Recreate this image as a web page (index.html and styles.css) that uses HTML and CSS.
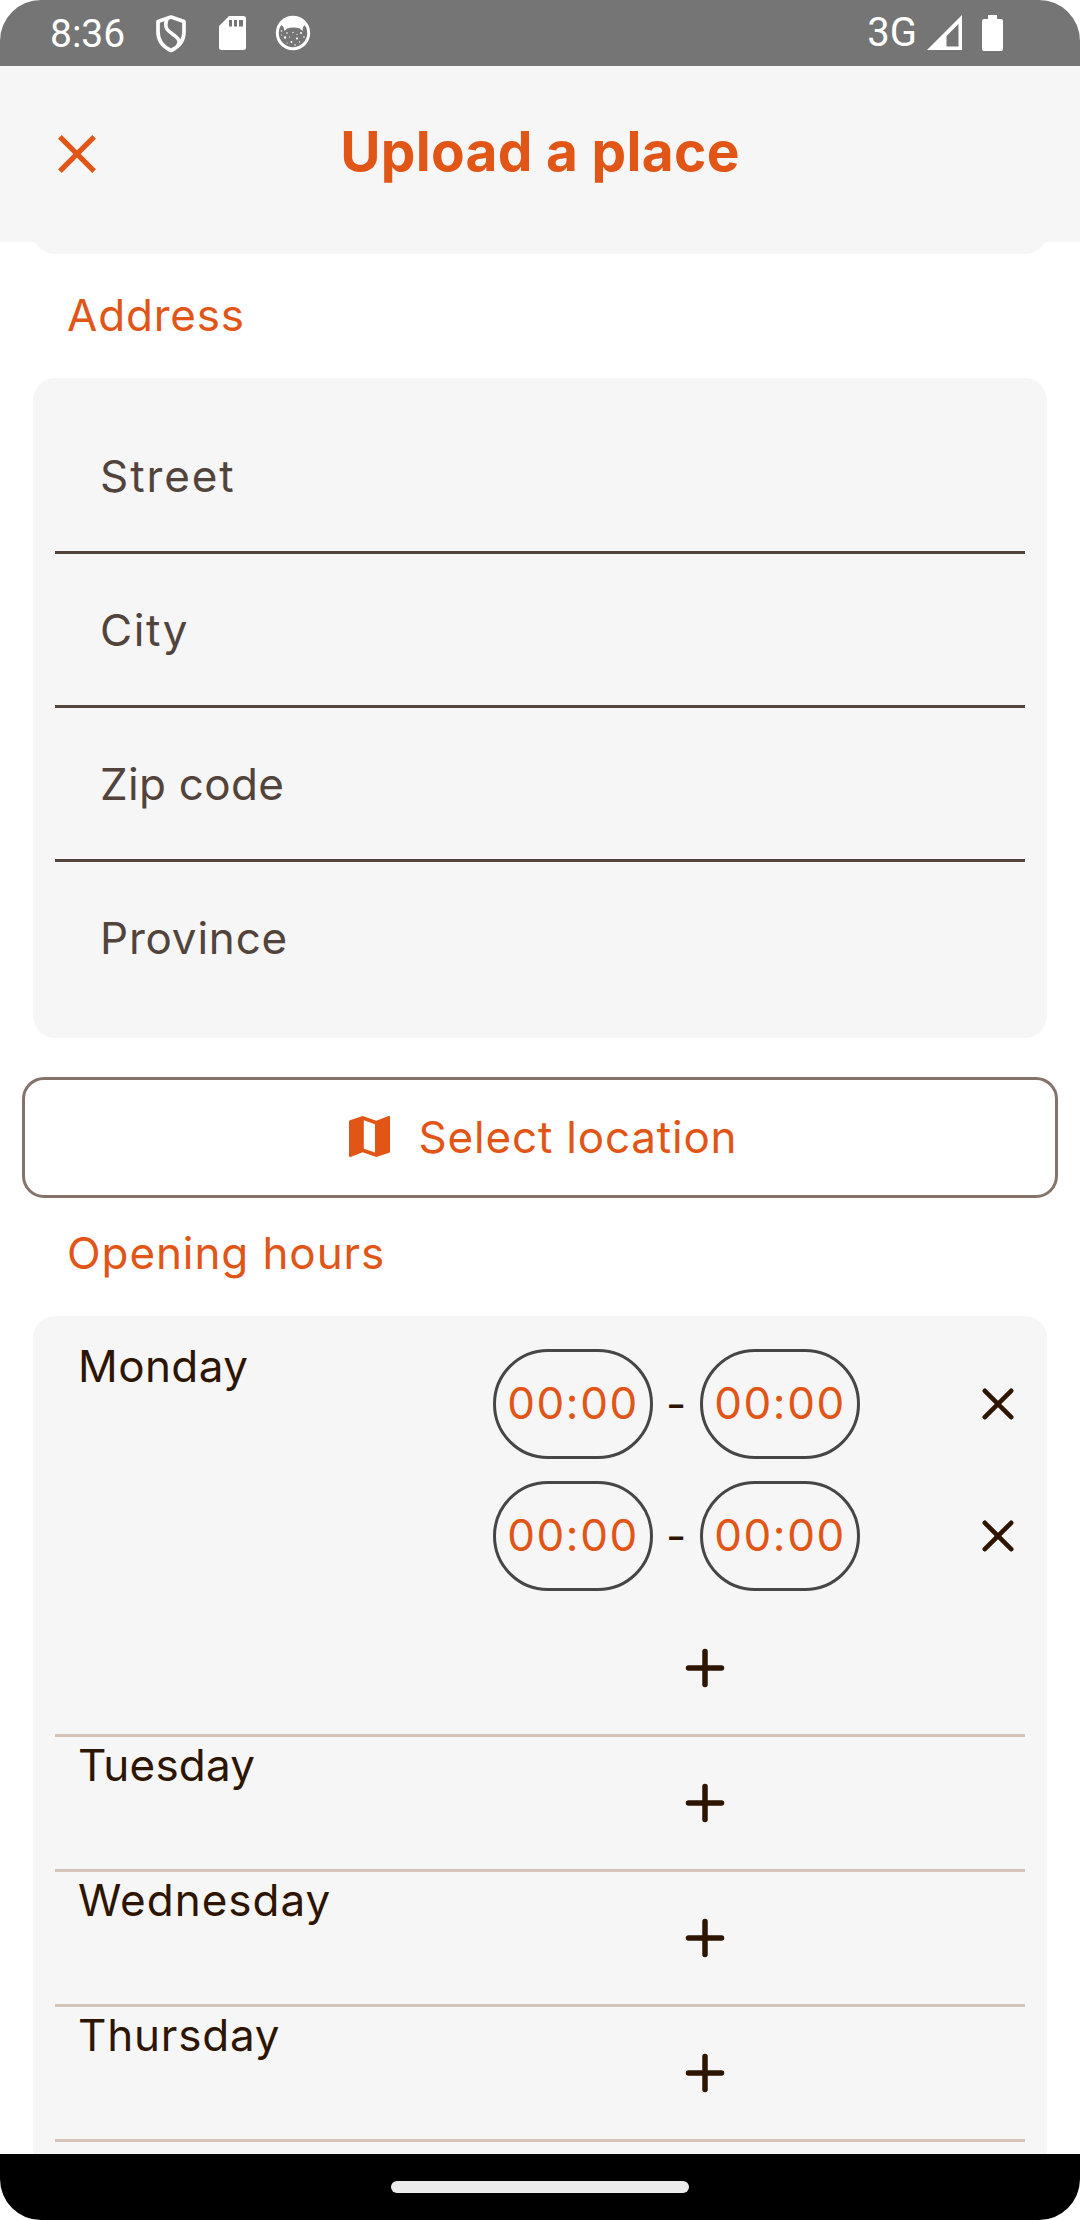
FILE: index.html
```html
<!DOCTYPE html>
<html lang="en">
<head>
<meta charset="utf-8">
<title>Upload a place</title>
<link rel="stylesheet" href="styles.css">
</head>
<body>
<svg class="defs" aria-hidden="true">
  <symbol id="plus" viewBox="0 0 40 40"><path d="M20 3.5V36.5M3.5 20H36.5" fill="none" stroke="currentColor" stroke-width="5.5" stroke-linecap="round"/></symbol>
  <symbol id="cross" viewBox="0 0 32 32"><path d="M2.8 2.8 29.2 29.2M29.2 2.8 2.8 29.2" fill="none" stroke="currentColor" stroke-width="4.6" stroke-linecap="round"/></symbol>
</svg>
<div class="screen">
  <div class="status">
    <span class="clock">8:36</span>
    <svg class="shield" viewBox="0 0 32 38"><path d="M16 2 29 6.5V17C29 25.5 23.5 32 16 35.5 8.5 32 3 25.5 3 17V6.5Z" fill="none" stroke="#fff" stroke-width="3.7" stroke-linejoin="round"/><path d="M12 4C8.5 13 13 16 17.5 19 24 23.5 26 26 22 32" fill="none" stroke="#fff" stroke-width="3.6"/></svg>
    <svg class="sd" viewBox="0 0 27 34"><path fill="#fff" fill-rule="evenodd" d="M10 0H24.5Q27 0 27 2.5V31.5Q27 34 24.5 34H2.5Q0 34 0 31.5V10ZM10 4V10.5H13V4ZM15 4V10.5H18V4ZM20 4V10.5H24V4Z"/></svg>
    <svg class="face" viewBox="0 0 36 36"><circle cx="18" cy="18" r="15.7" fill="none" stroke="#fff" stroke-width="3"/><path fill="#fff" d="M5 9Q10 1.500 18 1.500T31 9L28 12 27.500 16 25 13.500Q18 11.500 12 13.500L9.500 16 8.500 12Z"/><g fill="#fff"><circle cx="10" cy="22.5" r="1.2"/><circle cx="22" cy="23.5" r="1.1"/><circle cx="16.5" cy="27" r="1"/><circle cx="26" cy="18" r="1"/><circle cx="12" cy="18" r=".8"/><circle cx="18" cy="17.5" r=".7"/><circle cx="6.5" cy="16" r=".8"/><circle cx="29" cy="22" r=".8"/><circle cx="20" cy="30" r=".8"/><circle cx="14.5" cy="22" r=".6"/><circle cx="24.5" cy="27" r=".7"/><circle cx="6.5" cy="20" r=".6"/><circle cx="22" cy="19.5" r=".6"/><circle cx="12" cy="28" r=".6"/></g></svg>
    <span class="network">3G</span>
    <svg class="signal" viewBox="0 0 35 35"><path fill="#fff" fill-rule="evenodd" d="M35 0V35H0ZM31.5 9 19.5 21V31.5H31.5Z"/></svg>
    <svg class="battery" viewBox="0 0 21 36"><path fill="#fff" d="M6 0H15V4H19Q21 4 21 6V34Q21 36 19 36H2Q0 36 0 34V6Q0 4 2 4H6Z"/></svg>
  </div>
  <header class="appbar">
    <svg class="close" viewBox="0 0 38 38"><path d="M1.9 1.9 36.1 36.1M36.1 1.9 1.9 36.1" fill="none" stroke="currentColor" stroke-width="5.2"/></svg>
    <h1 class="title">Upload a place</h1>
  </header>
  <main class="content">
    <div class="card-tail"></div>
    <h2 class="label label-address">Address</h2>
    <section class="card fields">
      <div class="field street">Street</div>
      <div class="field city">City</div>
      <div class="field zip">Zip code</div>
      <div class="field province">Province</div>
    </section>
    <div class="location">
      <svg class="map" viewBox="3 3 18 18"><path fill="currentColor" d="M20.5 3l-.16.03L15 5.1 9 3 3.36 4.9c-.21.07-.36.25-.36.48V20.5c0 .28.22.5.5.5l.16-.03L9 18.9l6 2.1 5.64-1.900c.21-.07.36-.25.36-.48V3.5c0-.28-.22-.5-.5-.5z"/><path fill="#fff" d="M9.5 4.9 14.4 6.6V19L9.5 17.4Z"/></svg>
      <span>Select location</span>
    </div>
    <h2 class="label label-hours">Opening hours</h2>
    <section class="card days">
      <div class="day">
        <div class="name monday">Monday</div>
        <div class="slots">
          <div class="slot"><span class="time">00:00</span><span class="dash">-</span><span class="time">00:00</span><svg class="remove"><use href="#cross"/></svg></div>
          <div class="slot"><span class="time">00:00</span><span class="dash">-</span><span class="time">00:00</span><svg class="remove"><use href="#cross"/></svg></div>
          <div class="add"><svg class="plus"><use href="#plus"/></svg></div>
        </div>
      </div>
      <div class="day"><div class="name tuesday">Tuesday</div><div class="slots"><div class="add"><svg class="plus"><use href="#plus"/></svg></div></div></div>
      <div class="day"><div class="name wednesday">Wednesday</div><div class="slots"><div class="add"><svg class="plus"><use href="#plus"/></svg></div></div></div>
      <div class="day"><div class="name thursday">Thursday</div><div class="slots"><div class="add"><svg class="plus"><use href="#plus"/></svg></div></div></div>
      <div class="day"><div class="slots"><div class="add"></div></div></div>
    </section>
  </main>
  <div class="navbar"><div class="handle"></div></div>
</div>
</body>
</html>
```
FILE: styles.css
```css
* { box-sizing: border-box; }
body { margin: 0; background: #fff; }
svg { display: block; flex: none; }
.defs { display: none; }
.screen {
  width: 1080px; height: 2220px; overflow: hidden; border-radius: 41px;
  display: flex; flex-direction: column; background: #fff;
  font: 400 44px/56px Inter, "Liberation Sans", sans-serif;
  letter-spacing: 0.8px; color: #2e1500; white-space: nowrap;
}
.status {
  height: 66px; flex: none; display: flex; background: #757575; color: #fff;
  padding-left: 50px; font-family: Roboto, sans-serif; letter-spacing: 0;
}
.clock { width: 105px; font-size: 39px; font-weight: 400; line-height: 69px; }
.shield { width: 32px; height: 38px; margin-top: 15px; }
.sd { width: 27px; height: 34px; margin: 16px 0 0 32px; }
.face { width: 36px; height: 36px; margin: 15px 0 0 29px; }
.network { margin-left: auto; font-size: 40px; font-weight: 400; line-height: 65px; }
.signal { width: 35px; height: 35px; margin: 15px 0 0 10px; }
.battery { width: 21px; height: 36px; margin: 15px 77px 0 20px; }
.appbar {
  height: 176px; flex: none; display: flex; align-items: center;
  padding: 0 58px; background: #f6f6f6; color: #e15517;
}
.close { width: 38px; height: 38px; }
.title {
  flex: 1; margin: 0 38px 6px 0; text-align: center;
  font-size: 55px; font-weight: 700; letter-spacing: 0.3px;
}
.content { flex: 1; min-height: 0; overflow: hidden; display: flex; flex-direction: column; }
.content > * { flex: none; }
.card-tail { height: 22px; margin: -10px 33px 0; background: #f6f6f6; border-radius: 0 0 22px 22px; }
.label { margin: 0; padding-left: 67px; font-size: 44px; font-weight: 400; color: #e15517; }
.label-address { margin-top: 33px; margin-bottom: 35px; }
.label-hours { margin-top: 27px; margin-bottom: 35px; letter-spacing: 0.9px; }
.card { margin: 0 33px; padding: 22px; background: #f6f6f6; border-radius: 22px; }
.field {
  height: 154px; padding: 0 45px; line-height: 152px; color: #52443b;
  border-bottom: 3px solid #52443b;
}
.field:last-child { border-bottom: 0; }
.street { letter-spacing: 1.9px; }
.city { letter-spacing: 1.6px; }
.zip { letter-spacing: 0.3px; }
.location {
  height: 121px; margin: 39px 22px 0; padding: 0 0 2px 6px; display: flex; align-items: center; justify-content: center;
  gap: 29px; border: 3px solid #85736a; border-radius: 22px; color: #e15517;
}
.map { width: 41px; height: 41px; }
.day { display: flex; border-bottom: 3px solid #d6c3b7; padding-left: 23px; }
.name { width: 405px; }
.monday { letter-spacing: 0.4px; }
.tuesday { letter-spacing: 0.2px; }
.wednesday { letter-spacing: 1px; }
.slots { flex: 1; }
.slot { height: 132px; padding: 11px 0; display: flex; align-items: center; padding-left: 10px; }
.time {
  width: 160px; height: 110px; border: 3px solid #464646; border-radius: 55px;
  color: #e15517; text-align: center; line-height: 103px; letter-spacing: 1.6px;
}
.dash { width: 47px; text-align: center; }
.remove { width: 32px; height: 32px; margin: 0 11px 0 auto; }
.add { height: 132px; display: flex; align-items: center; padding-left: 202px; }
.plus { width: 40px; height: 40px; }
.navbar { height: 66px; flex: none; display: flex; align-items: center; justify-content: center; background: #000; }
.handle { width: 298px; height: 12px; border-radius: 6px; background: #ebebeb; }
```
